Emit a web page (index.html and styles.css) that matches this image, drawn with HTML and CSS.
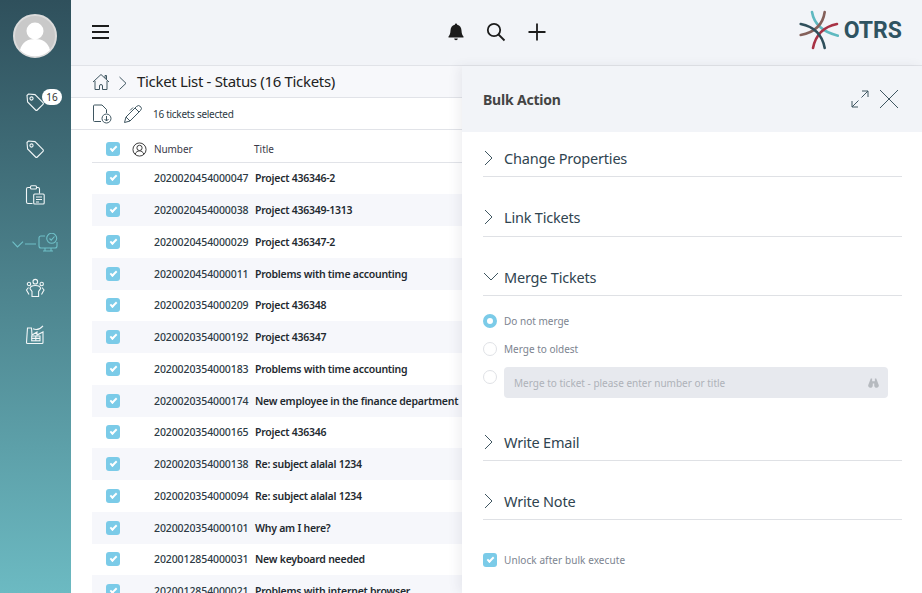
FILE: index.html
```html
<!DOCTYPE html>
<html lang="en">
<head>
    <meta charset="UTF-8">
    <title>Ticket List</title>
    <link rel="stylesheet" href="styles.css">
</head>
<body>
    <div class="app">
        <nav class="sidebar">
            <div class="avatar">
                <svg viewBox="0 0 44 44" width="44" height="44">
                    <circle cx="22" cy="22" r="21" fill="#c9c9c9" stroke="#dcdcdc" stroke-width="2"/>
                    <circle cx="22" cy="17" r="8.5" fill="#fff"/>
                    <path d="M7 36c2-8 8-11 15-11s13 3 15 11a21 21 0 0 1-30 0z" fill="#fff"/>
                </svg>
            </div>
            <div class="nav-item">
                <svg viewBox="0 0 20 20" width="20" height="20" class="nav-icon"><path d="M2 3.500 3.500 2l6.500.6 8 8a1.200 1.200 0 0 1 0 1.700l-5.700 5.700a1.200 1.200 0 0 1-1.700 0l-8-8z"/><circle cx="6.500" cy="6.500" r="1.600"/></svg>
                <span class="badge">16</span>
            </div>
            <div class="nav-item">
                <svg viewBox="0 0 20 20" width="20" height="20" class="nav-icon"><path d="M2 3.500 3.500 2l6.500.6 8 8a1.200 1.200 0 0 1 0 1.700l-5.700 5.700a1.200 1.200 0 0 1-1.700 0l-8-8z"/><circle cx="6.500" cy="6.500" r="1.600"/></svg>
            </div>
            <div class="nav-item">
                <svg viewBox="0 0 20 20" width="20" height="20" class="nav-icon"><path d="M5.500 2.500H3A1.500 1.500 0 0 0 1.500 4v13A1.500 1.500 0 0 0 3 18.500h4.500M11.500 2.500H13A1.500 1.500 0 0 1 14.500 4v4.500"/><rect x="5.500" y=".8" width="6" height="3.200" rx="1"/><rect x="8.700" y="9" width="10.500" height="10" rx="1"/><path d="M11 12h6M11 14.500h6M11 17h3"/></svg>
            </div>
            <div class="nav-item nav-active">
                <svg viewBox="0 0 46 20" width="46" height="20" class="nav-icon-teal"><path d="M.5 8.700 5.500 14 11 8.700M13 11h11"/><path d="M33 3h-4a2 2 0 0 0-2 2v8a2 2 0 0 0 2 2h14a2 2 0 0 0 2-2V9"/><circle cx="39.700" cy="5.300" r="5"/><path d="M37.500 5.500l1.700 1.700 3.300-3.700M33 15v3M39 15v3M31 18h10"/></svg>
            </div>
            <div class="nav-item">
                <svg viewBox="0 0 20 20" width="20" height="20" class="nav-icon"><circle cx="10.300" cy="3.700" r="2.300"/><path d="M7 18.500v-5L5 10.500C5.200 8.500 7.500 7.500 10.300 7.500s5.100 1 5.300 3L13.600 13.500v5z"/><circle cx="4" cy="6" r="1.700"/><circle cx="16.700" cy="6" r="1.700"/><path d="M3.500 9.500 1.500 12l2.500 4.500M17 9.500l2 2.500-2.500 4.500"/></svg>
            </div>
            <div class="nav-item">
                <svg viewBox="0 0 20 20" width="20" height="20" class="nav-icon"><path d="M2.500 18.500c-.7 0-1-.4-1-1L2.500 3h4L7 10l5-3v3l6-3v10.500c0 .6-.4 1-1 1z"/><path d="M8 3.800c3 1.300 6.500 1 10-3"/><rect x="6.700" y="11" width="8.300" height="4.800"/><path d="M10.800 11v4.800M6.700 13.400H15"/></svg>
            </div>
        </nav>

        <div class="content">
            <header class="topbar">
                <div class="hamburger"><span></span><span></span><span></span></div>
                <div class="top-actions">
                    <svg viewBox="0 0 18 20" width="18" height="20"><path fill="#1c1c1c" d="M9 1.500a1.200 1.200 0 0 1 1.200 1.200C13 3.300 14.400 5.500 14.500 8.500c.1 3 .9 4.800 2 6v1h-15v-1c1.100-1.200 1.900-3 2-6 .1-3 1.500-5.200 4.300-5.800A1.200 1.200 0 0 1 9 1.500z"/><path fill="#1c1c1c" d="M7.200 16.500h3.600a1.800 1.800 0 0 1-3.600 0z"/></svg>
                    <svg viewBox="0 0 20 20" width="20" height="20" class="stroke-dark"><circle cx="8" cy="8" r="6.200"/><path d="M12.500 12.500 18.500 18.500"/></svg>
                    <svg viewBox="0 0 20 20" width="20" height="20" class="stroke-dark"><path d="M10 1.500v17M1.500 10h17"/></svg>
                </div>
                <div class="logo">
                    <svg viewBox="0 0 40 40" width="40" height="40" fill="none" stroke-width="2.600" stroke-linecap="round">
                        <path d="M13 2Q16 20 39 25.700" stroke="#5fb9c0"/>
                        <path d="M25.700 2Q23 21 1.700 25" stroke="#84605a"/>
                        <path d="M38 14Q18 18 14 38" stroke="#a83245"/>
                        <path d="M1.700 14Q22 18 25.700 38" stroke="#2f4f5b"/>
                    </svg>
                    <span class="logo-text">OTRS</span>
                </div>
            </header>

            <div class="crumbs">
                <svg viewBox="0 0 18 18" width="18" height="18" class="stroke-slate"><path d="M1 9 9 1.500 17 9M13 5V2.500h1.500V6.500M3 8v8.500h4.500v-3.500a1.500 1.500 0 0 1 3 0v3.500H15V8"/></svg>
                <svg viewBox="0 0 10 16" width="10" height="16" class="stroke-slate"><path d="M1.500 3 8 9.300 1.500 15.500"/></svg>
                <span class="crumb-title">Ticket List - Status (16 Tickets)</span>
            </div>

            <div class="toolbar">
                <svg viewBox="0 0 20 20" width="20" height="20" class="stroke-slate"><path d="M9 17.500H2.500a1 1 0 0 1-1-1V2a1 1 0 0 1 1-1H10l4.500 4.500V9"/><circle cx="14.500" cy="14.500" r="4.500"/><path d="M14.500 12v5M12.500 15l2 2 2-2"/></svg>
                <svg viewBox="0 0 20 20" width="20" height="20" class="stroke-slate"><path d="M1.500 18.500 3 13 13.500 2.500a2.500 2.500 0 0 1 4 4L7 17z"/><path d="M12 4l4 4M3 13l4 4M10 3.500 7 6.500"/></svg>
                <span class="selected">16 tickets selected</span>
            </div>

            <div class="table">
                <div class="thead">
                    <span class="check"></span>
                    <svg viewBox="0 0 16 16" width="15" height="15" class="stroke-head"><circle cx="8" cy="8" r="7"/><circle cx="8" cy="6.300" r="2.800"/><path d="M3.300 13c1-2.500 2.700-3.500 4.700-3.500s3.700 1 4.700 3.500"/></svg>
                    <span class="th-number">Number</span>
                    <span class="th-title">Title</span>
                </div>
                <div class="row"><span class="check"></span><span class="num">2020020454000047</span><span class="title">Project 436346-2</span></div>
                <div class="row"><span class="check"></span><span class="num">2020020454000038</span><span class="title">Project 436349-1313</span></div>
                <div class="row"><span class="check"></span><span class="num">2020020454000029</span><span class="title">Project 436347-2</span></div>
                <div class="row"><span class="check"></span><span class="num">2020020454000011</span><span class="title">Problems with time accounting</span></div>
                <div class="row"><span class="check"></span><span class="num">2020020354000209</span><span class="title">Project 436348</span></div>
                <div class="row"><span class="check"></span><span class="num">2020020354000192</span><span class="title">Project 436347</span></div>
                <div class="row"><span class="check"></span><span class="num">2020020354000183</span><span class="title">Problems with time accounting</span></div>
                <div class="row"><span class="check"></span><span class="num">2020020354000174</span><span class="title">New employee in the finance department</span></div>
                <div class="row"><span class="check"></span><span class="num">2020020354000165</span><span class="title">Project 436346</span></div>
                <div class="row"><span class="check"></span><span class="num">2020020354000138</span><span class="title">Re: subject alalal 1234</span></div>
                <div class="row"><span class="check"></span><span class="num">2020020354000094</span><span class="title">Re: subject alalal 1234</span></div>
                <div class="row"><span class="check"></span><span class="num">2020020354000101</span><span class="title">Why am I here?</span></div>
                <div class="row"><span class="check"></span><span class="num">2020012854000031</span><span class="title">New keyboard needed</span></div>
                <div class="row"><span class="check"></span><span class="num">2020012854000021</span><span class="title">Problems with internet browser</span></div>
            </div>

            <aside class="panel">
                <div class="panel-head">
                    <span class="panel-title">Bulk Action</span>
                    <div class="panel-tools">
                        <svg viewBox="0 0 20 20" width="20" height="20" class="stroke-slate"><path d="M2 18l6.500-6.500M11.500 8.500 18 2M12 2h6v6M2 12v6h6"/></svg>
                        <svg viewBox="0 0 20 20" width="20" height="20" class="stroke-slate"><path d="M1 1l18 18M19 1 1 19"/></svg>
                    </div>
                </div>
                <div class="panel-body">
                    <div class="section">
                        <svg viewBox="0 0 12 16" width="12" height="16" class="chev"><path d="M2 1l7 7-7 7"/></svg>
                        <span>Change Properties</span>
                    </div>
                    <div class="section">
                        <svg viewBox="0 0 12 16" width="12" height="16" class="chev"><path d="M2 1l7 7-7 7"/></svg>
                        <span>Link Tickets</span>
                    </div>
                    <div class="section">
                        <svg viewBox="0 0 16 12" width="16" height="12" class="chev chev-open"><path d="M1 2l7 7 7-7"/></svg>
                        <span>Merge Tickets</span>
                    </div>
                    <div class="merge-opts">
                        <div class="opt"><span class="radio radio-on"></span><span>Do not merge</span></div>
                        <div class="opt"><span class="radio"></span><span>Merge to oldest</span></div>
                        <div class="opt opt-input">
                            <span class="radio"></span>
                            <div class="fake-input">
                                <span>Merge to ticket - please enter number or title</span>
                                <svg viewBox="0 0 12 10" width="11" height="10"><path fill="#b6babf" d="M3 0h1.500v3h3V0H9l2.500 6.500a2.500 2.500 0 1 1-4.700 1V5.500H5.200v2a2.500 2.500 0 1 1-4.700-1z"/></svg>
                            </div>
                        </div>
                    </div>
                    <div class="section section-after">
                        <svg viewBox="0 0 12 16" width="12" height="16" class="chev"><path d="M2 1l7 7-7 7"/></svg>
                        <span>Write Email</span>
                    </div>
                    <div class="section section-note">
                        <svg viewBox="0 0 12 16" width="12" height="16" class="chev"><path d="M2 1l7 7-7 7"/></svg>
                        <span>Write Note</span>
                    </div>
                    <div class="unlock"><span class="check"></span><span>Unlock after bulk execute</span></div>
                </div>
            </aside>
        </div>
    </div>
</body>
</html>
```

FILE: styles.css
```css
html, body {
    margin: 0;
    height: 100%;
    overflow: hidden;
}
body {
    font-family: "Noto Sans", Arial, sans-serif;
    color: #2c3a44;
    background: #fff;
}
svg {
    display: block;
    flex: none;
    fill: none;
}
.app {
    display: flex;
    height: 593px;
    overflow: hidden;
}

/* sidebar */
.sidebar {
    width: 71px;
    flex: none;
    display: flex;
    flex-direction: column;
    align-items: center;
    background: linear-gradient(to bottom, #2f505c, #6cbac2);
    padding: 14px 1px 0 0;
    box-sizing: border-box;
}
.avatar {
    height: 44px;
    margin-bottom: 27px;
}
.nav-item {
    position: relative;
    height: 46.500px;
    width: 70px;
    flex: none;
    display: flex;
    justify-content: center;
    padding-top: 7px;
    box-sizing: border-box;
}
.nav-active {
    padding-top: 8px;
}
.nav-icon {
    stroke: #f1f6f7;
    stroke-width: 1.100;
}
.nav-icon-teal {
    stroke: #6fc0c8;
    stroke-width: 1.100;
}
.badge {
    position: absolute;
    top: 4px;
    left: 42px;
    width: 20px;
    height: 16px;
    border-radius: 8px;
    background: #fff;
    font-size: 10px;
    line-height: 16px;
    text-align: center;
    color: #333;
}

/* main column */
.content {
    position: relative;
    flex: 1;
    min-width: 0;
    display: flex;
    flex-direction: column;
}
.topbar {
    height: 65px;
    flex: none;
    display: flex;
    align-items: center;
    background: #f2f4f8;
    border-bottom: 1px solid #e1e3e8;
    padding: 0 20px 0 21px;
}
.hamburger {
    width: 17px;
    display: flex;
    flex-direction: column;
    gap: 4px;
    margin-bottom: 1px;
}
.hamburger span {
    height: 2px;
    background: #1c1c1c;
}
.top-actions {
    display: flex;
    align-items: center;
    gap: 21px;
    margin-left: 338px;
    margin-bottom: 1px;
}
.stroke-dark {
    stroke: #1c1c1c;
    stroke-width: 1.800;
}
.stroke-slate {
    stroke: #3f5661;
    stroke-width: 1;
}
.stroke-head {
    stroke: #333;
    stroke-width: 1;
}
.logo {
    margin-left: auto;
    margin-bottom: 5px;
    display: flex;
    align-items: center;
    gap: 5px;
}
.logo-text {
    font-family: "Roboto", Arial, sans-serif;
    font-weight: 700;
    font-size: 23px;
    color: #2f5361;
}
.crumbs {
    height: 31px;
    flex: none;
    display: flex;
    align-items: center;
    padding-left: 21px;
    background: #f7f8fb;
    border-bottom: 1px solid #e1e3e8;
}
.crumbs svg:nth-child(2) {
    margin-left: 8px;
}
.crumb-title {
    margin-left: 9px;
    margin-top: -2px;
    font-size: 15px;
    color: #222;
    letter-spacing: -.32px;
}
.toolbar {
    height: 31px;
    flex: none;
    display: flex;
    align-items: center;
    padding-left: 21px;
    gap: 11px;
    background: #fff;
    border-bottom: 1px solid #e1e3e8;
}
.selected {
    font-size: 10px;
    margin-left: -1px;
    letter-spacing: -.28px;
    color: #2c3a44;
}

/* table */
.table {
    margin-left: 21px;
}
.thead {
    height: 32.500px;
    display: flex;
    align-items: center;
    padding: 7px 0 0 14px;
    border-bottom: 1px solid #e1e3e8;
    font-size: 10px;
    color: #3a3a4a;
    box-sizing: border-box;
}
.thead svg {
    margin-left: 12px;
}
.th-number {
    margin-left: 7px;
    width: 100px;
    letter-spacing: -.1px;
}
.row {
    height: 31.750px;
    display: flex;
    align-items: center;
    padding-left: 14px;
    font-size: 10.500px;
    font-weight: 500;
    white-space: nowrap;
}
.row:nth-child(odd) {
    background: #f6f7fb;
}
.check {
    width: 14px;
    height: 14px;
    flex: none;
    border-radius: 3px;
    background: #7bcbe8;
    position: relative;
}
.check::after {
    content: "";
    position: absolute;
    left: 4px;
    top: 4px;
    width: 5px;
    height: 2px;
    border-left: 2px solid #fff;
    border-bottom: 2px solid #fff;
    transform: rotate(-45deg);
}
.num {
    margin-left: 34px;
    width: 101px;
    color: #2c3a44;
    letter-spacing: -.1px;
}
.title {
    font-weight: 600;
    color: #1f2a30;
    letter-spacing: -.25px;
}

/* bulk action panel */
.panel {
    position: absolute;
    left: 391px;
    right: 0;
    top: 66px;
    bottom: 0;
    background: #fff;
    box-shadow: -4px 0 10px rgba(60, 70, 90, .08);
    display: flex;
    flex-direction: column;
}
.panel-head {
    height: 66px;
    flex: none;
    display: flex;
    align-items: center;
    justify-content: space-between;
    padding: 0 23px 0 21px;
    background: #f2f4f8;
}
.panel-title {
    font-size: 14px;
    font-weight: 700;
    color: #444;
    letter-spacing: -.2px;
}
.panel-tools {
    display: flex;
    gap: 9px;
}
.panel-body {
    padding: 0 20px 0 21px;
}
.section {
    height: 45px;
    margin-top: 14.500px;
    padding-top: 7.500px;
    display: flex;
    align-items: center;
    gap: 9px;
    border-bottom: 1px solid #dfe1e5;
    font-size: 14.500px;
    color: #2f4450;
    letter-spacing: -.2px;
    box-sizing: border-box;
}
.panel-body .section:first-child {
    margin-top: 0;
}
.chev {
    stroke: #3f5661;
    stroke-width: 1;
}
.chev-open {
    margin-right: -4px;
}
.merge-opts {
    padding-top: 11px;
}
.opt {
    height: 28px;
    display: flex;
    align-items: center;
    gap: 7px;
    font-size: 10px;
    color: #7c8490;
}
.opt-input {
    align-items: flex-start;
    height: 31px;
    margin-top: 4px;
}
.radio {
    width: 14px;
    height: 14px;
    flex: none;
    border-radius: 50%;
    background: #fff;
    border: 1px solid #e0e2e6;
    box-sizing: border-box;
}
.opt-input .radio {
    margin-top: 3px;
}
.radio-on {
    border: 4px solid #7bcbe8;
}
.fake-input {
    flex: 1;
    height: 31px;
    display: flex;
    align-items: center;
    justify-content: space-between;
    padding: 0 9px 0 10px;
    margin-right: 14px;
    background: #e7e9ee;
    border-radius: 4px;
    color: #aeb2b9;
}
.section-after {
    margin-top: 18px;
}
.section-note {
    margin-top: 14px;
}
.unlock {
    margin-top: 32.500px;
    display: flex;
    align-items: center;
    gap: 7px;
    font-size: 10px;
    letter-spacing: .08px;
    color: #7c8490;
}
```
